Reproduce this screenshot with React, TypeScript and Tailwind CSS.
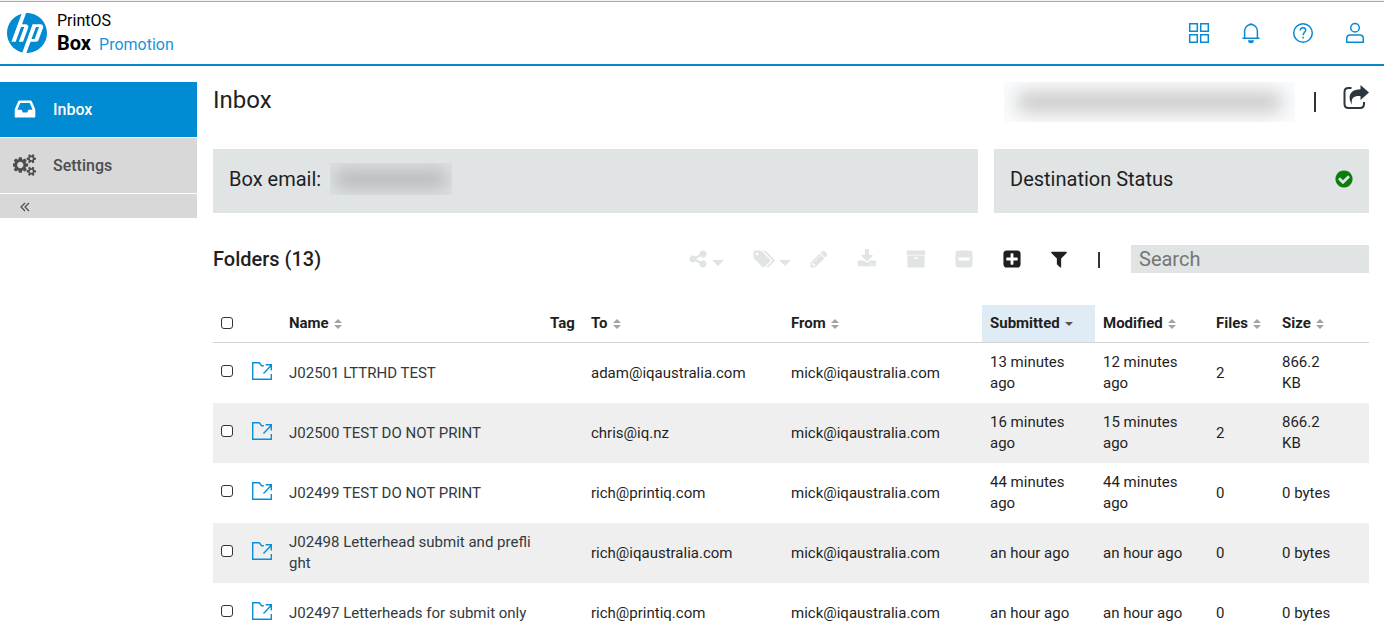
import type { ReactNode } from "react";
import { SiHp } from "react-icons/si";

const squarePath =
  "M1664 416v960q0 119-84.5 203.5t-203.5 84.5h-960q-119 0-203.5-84.5t-84.5-203.5v-960q0-119 84.5-203.5t203.5-84.5h960q119 0 203.5 84.5t84.5 203.5z";

const glyphs = {
  inbox:
    "M1151 960h316q-1-3-2.5-8t-2.5-8l-212-496h-708l-212 496q-1 2-2.5 8t-2.5 8h316l95 192h320zm513 30v482q0 26-19 45t-45 19h-1408q-26 0-45-19t-19-45v-482q0-62 25-123l238-552q10-25 36.5-42t52.5-17h832q26 0 52.5 17t36.5 42l238 552q25 61 25 123z",
  cogs: "M832 896q0-106-75-181t-181-75-181 75-75 181 75 181 181 75 181-75 75-181zm768 512q0-52-38-90t-90-38-90 38-38 90q0 53 37.5 90.5t90.5 37.5 90.5-37.5 37.5-90.5zm0-1024q0-52-38-90t-90-38-90 38-38 90q0 53 37.5 90.5t90.5 37.5 90.5-37.5 37.5-90.5zm-384 421v185q0 10-7 19.5t-16 10.5l-155 24q-11 35-32 76 34 48 90 115 7 11 7 20 0 12-7 19-23 30-82.5 89.5t-78.5 59.5q-11 0-21-7l-115-90q-37 19-77 31-11 108-23 155-7 24-30 24h-186q-11 0-20-7.5t-10-17.5l-23-153q-34-10-75-31l-118 89q-7 7-20 7-11 0-21-8-144-133-144-160 0-9 7-19 10-14 41-53t47-61q-23-44-35-82l-152-24q-10-1-17-9.5t-7-19.5v-185q0-10 7-19.5t16-10.5l155-24q11-35 32-76-34-48-90-115-7-11-7-20 0-12 7-20 22-30 82-89t79-59q11 0 21 7l115 90q34-18 77-32 11-108 23-154 7-24 30-24h186q11 0 20 7.5t10 17.5l23 153q34 10 75 31l118-89q8-7 20-7 11 0 21 8 144 133 144 160 0 8-7 19-12 16-42 54t-45 60q23 48 34 82l152 23q10 2 17 10.5t7 19.5zm640 533v140q0 16-149 31-12 27-30 52 51 113 51 138 0 4-4 7-122 71-124 71-8 0-46-47t-52-68q-20 2-30 2t-30-2q-14 21-52 68t-46 47q-2 0-124-71-4-3-4-7 0-25 51-138-18-25-30-52-149-15-149-31v-140q0-16 149-31 13-29 30-52-51-113-51-138 0-4 4-7 4-2 35-20t59-34 30-16q8 0 46 46.5t52 67.5q20-2 30-2t30 2q51-71 92-112l6-2q4 0 124 70 4 3 4 7 0 25-51 138 17 23 30 52 149 15 149 31zm0-1024v140q0 16-149 31-12 27-30 52 51 113 51 138 0 4-4 7-122 71-124 71-8 0-46-47t-52-68q-20 2-30 2t-30-2q-14 21-52 68t-46 47q-2 0-124-71-4-3-4-7 0-25 51-138-18-25-30-52-149-15-149-31v-140q0-16 149-31 13-29 30-52-51-113-51-138 0-4 4-7 4-2 35-20t59-34 30-16q8 0 46 46.5t52 67.5q20-2 30-2t30 2q51-71 92-112l6-2q4 0 124 70 4 3 4 7 0 25-51 138 17 23 30 52 149 15 149 31z",
  share:
    "M1344 1024q133 0 226.5 93.5t93.5 226.5-93.5 226.5-226.5 93.5-226.5-93.5-93.5-226.5q0-12 2-34l-360-180q-92 86-218 86-133 0-226.5-93.5t-93.5-226.5 93.5-226.5 226.5-93.5q126 0 218 86l360-180q-2-22-2-34 0-133 93.5-226.5t226.5-93.5 226.5 93.5 93.5 226.5-93.5 226.5-226.5 93.5q-126 0-218-86l-360 180q2 22 2 34t-2 34l360 180q92-86 218-86z",
  tags: "M576 448q0-53-37.5-90.5t-90.5-37.5-90.5 37.5-37.5 90.5 37.5 90.5 90.5 37.5 90.5-37.5 37.5-90.5zm1067 576q0 53-37 90l-491 492q-39 37-91 37-53 0-90-37l-715-716q-38-37-64.5-101t-26.5-117v-416q0-52 38-90t90-38h416q53 0 117 26.5t102 64.5l715 714q37 39 37 91zm384 0q0 53-37 90l-491 492q-39 37-91 37-36 0-59-14t-53-45l470-470q37-37 37-90 0-52-37-91l-715-714q-38-38-102-64.5t-117-26.5h224q53 0 117 26.5t102 64.5l715 714q37 39 37 91z",
  pencil:
    "M491 1536l91-91-235-235-91 91v107h128v128h107zm523-928q0-22-22-22-10 0-17 7l-542 542q-7 7-7 17 0 22 22 22 10 0 17-7l542-542q7-7 7-17zm-54-192l416 416-832 832h-416v-416zm683 96q0 53-37 90l-166 166-416-416 166-165q36-38 90-38 53 0 91 38l235 234q37 39 37 91z",
  download:
    "M1344 1344q0-26-19-45t-45-19-45 19-19 45 19 45 45 19 45-19 19-45zm256 0q0-26-19-45t-45-19-45 19-19 45 19 45 45 19 45-19 19-45zm128-224v320q0 40-28 68t-68 28h-1472q-40 0-68-28t-28-68v-320q0-40 28-68t68-28h465l135 136q58 56 136 56t136-56l136-136h464q40 0 68 28t28 68zm-325-569q17 41-14 70l-448 448q-18 19-45 19t-45-19l-448-448q-31-29-14-70 17-39 59-39h256v-448q0-26 19-45t45-19h256q26 0 45 19t19 45v448h256q42 0 59 39z",
  archive:
    "M1088 832q0-26-19-45t-45-19h-256q-26 0-45 19t-19 45 19 45 45 19h256q26 0 45-19t19-45zm576-192v960q0 26-19 45t-45 19h-1408q-26 0-45-19t-19-45v-960q0-26 19-45t45-19h1408q26 0 45 19t19 45zm64-448v256q0 26-19 45t-45 19h-1536q-26 0-45-19t-19-45v-256q0-26 19-45t45-19h1536q26 0 45 19t19 45z",
  minus:
    "M1408 960v-128q0-26-19-45t-45-19h-896q-26 0-45 19t-19 45v128q0 26 19 45t45 19h896q26 0 45-19t19-45z" +
    squarePath,
  plus:
    "M1408 960v-128q0-26-19-45t-45-19h-320v-320q0-26-19-45t-45-19h-128q-26 0-45 19t-19 45v320h-320q-26 0-45 19t-19 45v128q0 26 19 45t45 19h320v320q0 26 19 45t45 19h128q26 0 45-19t19-45v-320h320q26 0 45-19t19-45z" +
    squarePath,
  filter:
    "M1595 295q17 41-14 70l-493 493v742q0 42-39 59-13 5-25 5-27 0-45-19l-256-256q-19-19-19-45v-486l-493-493q-31-29-14-70 17-39 59-39h1280q42 0 59 39z",
  check:
    "M1412 734q0-28-18-46l-91-90q-19-19-45-19t-45 19l-408 407-226-226q-19-19-45-19t-45 19l-91 90q-18 18-18 46 0 27 18 45l362 362q19 19 45 19 27 0 46-19l543-543q18-18 18-45zm252 162q0 209-103 385.5t-279.5 279.5-385.5 103-385.5-103-279.5-279.5-103-385.5 103-385.5 279.5-279.5 385.5-103 385.5 103 279.5 279.5 103 385.5z",
};

function Glyph({ name, box = "0 0 1792 1792", className }: { name: keyof typeof glyphs; box?: string; className: string }) {
  return (
    <svg viewBox={box} className={className} fill="currentColor" fillRule="evenodd" aria-hidden="true">
      <path d={glyphs[name]} />
    </svg>
  );
}

function Line({ children, className = "size-6" }: { children: ReactNode; className?: string }) {
  return (
    <svg viewBox="0 0 24 24" className={className} fill="none" stroke="currentColor" strokeWidth="1.5" aria-hidden="true">
      {children}
    </svg>
  );
}

function Caret() {
  return (
    <svg viewBox="0 0 12 6" className="mt-2 h-[6px] w-3" fill="currentColor" aria-hidden="true">
      <path d="M0 0h12L6 6z" />
    </svg>
  );
}

function Sorter() {
  return (
    <svg viewBox="0 0 8 10" className="mt-px h-[10px] w-2" fill="#a3a3a3" aria-hidden="true">
      <path d="M4 0l4 4H0zM4 10L0 6h8z" />
    </svg>
  );
}

function FolderIcon() {
  return (
    <svg viewBox="0 0 22 20" className="h-5 w-[22px]" fill="none" stroke="#0a8fd6" strokeWidth="1.4" aria-hidden="true">
      <path d="M20.3 13v5.3H1.7V1.7h6.6L10.6 4.7h2.2" />
      <path d="M12.5 12.5l7.6-8M14.6 3.8h5.7v5.8" />
    </svg>
  );
}

function Header() {
  return (
    <header className="flex h-[66px] shrink-0 items-center justify-between border-t border-b-2 border-t-[#f1f1f1] border-b-[#0a86cb] pr-[17px] pl-[7px] shadow-[inset_0_1px_0_#a9a9a9]">
      <div className="flex items-center gap-[10px]">
        <SiHp className="size-10 text-[#008bd2]" aria-label="HP" />
        <div className="flex flex-col pt-px text-base leading-[22px] text-black">
          <span>PrintOS</span>
          <span className="flex items-baseline gap-2">
            <b className="text-xl leading-[22px]">Box</b>
            <a href="#promotion" className="text-[#1a94d6]">Promotion</a>
          </span>
        </div>
      </div>
      <nav className="flex gap-7 text-[#0a8ad0]">
        <button aria-label="Applications">
          <Line>
            <path d="M2.700 2.700h7.600v7.600H2.700zM13.700 2.700h7.600v7.600h-7.600zM2.700 13.700h7.600v7.600H2.700zM13.700 13.700h7.600v7.600h-7.600z" />
          </Line>
        </button>
        <button aria-label="Notifications">
          <Line>
            <path d="M3.5 17.3h17M5.6 17.3V10a6.4 6.4 0 0 1 12.8 0v7.3" />
            <path d="M10.2 4a1.8 1.8 0 0 1 3.6 0M9 19.200h6a3 3 0 0 1-6 0z" fill="currentColor" stroke="none" />
          </Line>
        </button>
        <button aria-label="Help">
          <Line>
            <circle cx="12" cy="12" r="9.3" />
            <path d="M9.300 9.500c0-1.800 1.100-2.800 2.700-2.800s2.700 1 2.700 2.500c0 2-2.600 2.400-2.600 5M12.100 15.800v1.700" />
          </Line>
        </button>
        <button aria-label="Account">
          <Line>
            <circle cx="12" cy="6.700" r="4.300" />
            <path d="M3.700 21.300v-3.600c0-2.300 1.400-3.700 3.700-3.700h9.200c2.300 0 3.700 1.400 3.700 3.700v3.600z" />
          </Line>
        </button>
      </nav>
    </header>
  );
}

function Sidebar() {
  return (
    <nav className="flex w-[197px] shrink-0 flex-col gap-px text-base font-medium text-[#4d4d4d]">
      <a href="#inbox" className="flex h-[55px] items-center gap-4 bg-[#008bd2] pl-[13px] text-white">
        <span className="flex w-6 pb-px">
          <Glyph name="inbox" className="size-6" box="0 0 1792 1792" />
        </span>
        Inbox
      </a>
      <a href="#settings" className="flex h-[55px] items-center gap-4 bg-[#d8d8d8] pl-[13px]">
        <span className="flex w-6 pb-[2px]">
          <Glyph name="cogs" box="0 0 1920 1792" className="h-[22px] w-6" />
        </span>
        Settings
      </a>
      <button aria-label="Collapse menu" className="flex h-6 items-center bg-[#d8d8d8] pt-px pl-5">
        <svg viewBox="0 0 10 10" className="size-[10px]" fill="none" stroke="currentColor" strokeWidth="1.2" aria-hidden="true">
          <path d="M5 1L1 5l4 4M9 1L5 5l4 4" />
        </svg>
      </button>
    </nav>
  );
}

function Toolbar() {
  return (
    <div className="flex items-center text-[#1f1f1f]">
      <div className="flex items-center text-[#e0e4e5]">
        <button aria-label="Share" className="mr-7 flex items-center gap-1">
          <Glyph name="share" className="size-5" />
          <Caret />
        </button>
        <button aria-label="Tags" className="mr-[18px] flex items-center gap-1">
          <Glyph name="tags" box="0 0 2048 1792" className="h-5 w-[23px]" />
          <Caret />
        </button>
        <button aria-label="Edit" className="mr-7">
          <Glyph name="pencil" className="size-5" />
        </button>
        <button aria-label="Download" className="mr-[29px]">
          <Glyph name="download" className="size-5" />
        </button>
        <button aria-label="Archive" className="mr-7">
          <Glyph name="archive" className="size-5" />
        </button>
        <button aria-label="Remove" className="mr-7">
          <Glyph name="minus" className="size-5" />
        </button>
      </div>
      <button aria-label="Add" className="mr-[27px]">
        <Glyph name="plus" className="size-5" />
      </button>
      <button aria-label="Filter" className="mr-[29px]">
        <Glyph name="filter" className="size-5" />
      </button>
      <span className="mt-px mr-[31px] h-4 w-[2px] bg-[#333]" />
      <input
        type="search"
        aria-label="Search"
        placeholder="Search"
        className="h-7 w-[238px] bg-[#e0e4e5] px-2 text-xl text-[#222] outline-none placeholder:text-[#757575]"
      />
    </div>
  );
}

const columns = [
  { label: "Name", sort: true },
  { label: "Tag", sort: false },
  { label: "To", sort: true },
  { label: "From", sort: true },
  { label: "Submitted", sort: true },
  { label: "Modified", sort: true },
  { label: "Files", sort: true },
  { label: "Size", sort: true },
];

const rows = [
  ["J02501 LTTRHD TEST", "", "adam@iqaustralia.com", "mick@iqaustralia.com", "13 minutes ago", "12 minutes ago", "2", "866.2 KB"],
  ["J02500 TEST DO NOT PRINT", "", "chris@iq.nz", "mick@iqaustralia.com", "16 minutes ago", "15 minutes ago", "2", "866.2 KB"],
  ["J02499 TEST DO NOT PRINT", "", "rich@printiq.com", "mick@iqaustralia.com", "44 minutes ago", "44 minutes ago", "0", "0 bytes"],
  ["J02498 Letterhead submit and preflight", "", "rich@iqaustralia.com", "mick@iqaustralia.com", "an hour ago", "an hour ago", "0", "0 bytes"],
  ["J02497 Letterheads for submit only", "", "rich@printiq.com", "mick@iqaustralia.com", "an hour ago", "an hour ago", "0", "0 bytes"],
];

function Check({ label }: { label: string }) {
  return (
    <input
      type="checkbox"
      aria-label={label}
      className="block size-3 appearance-none rounded-[3px] border border-[#333] bg-white checked:bg-[#008bd2]"
    />
  );
}

function FolderTable() {
  return (
    <table className="w-full table-fixed border-separate border-spacing-0 text-left text-[15px] leading-[21px] text-[#1f1f1f]">
      <colgroup>
        <col className="w-[30px]" />
        <col className="w-[38px]" />
        <col />
        <col className="w-[41px]" />
        <col className="w-[200px]" />
        <col className="w-[199px]" />
        <col className="w-[113px]" />
        <col className="w-[113px]" />
        <col className="w-[66px]" />
        <col className="w-[66px]" />
        <col className="w-[29px]" />
      </colgroup>
      <thead>
        <tr className="h-[38px] *:border-b *:border-[#d3d3d3]">
          <th className="pb-[2px] pl-2"><Check label="Select all folders" /></th>
          <th />
          {columns.map((c) => (
            <th key={c.label} className={c.label === "Submitted" ? "bg-[#dfecf5] px-2" : "px-2"}>
              <span className="flex items-center gap-[5px]">
                {c.label}
                {c.label === "Submitted" ? (
                  <svg viewBox="0 0 8 4" className="h-1 w-2" fill="#555" aria-hidden="true">
                    <path d="M0 0h8L4 4z" />
                  </svg>
                ) : (
                  c.sort && <Sorter />
                )}
              </span>
            </th>
          ))}
          <th />
        </tr>
      </thead>
      <tbody>
        {rows.map((r) => (
          <tr key={r[0]} className="h-[60px] even:bg-[#efefef]">
            <td className="pb-1 pl-2"><Check label={r[0]} /></td>
            <td className="pb-1 pl-2"><FolderIcon /></td>
            {r.map((v, i) => (
              <td key={i} className={i === 0 ? "px-2 break-all text-[#313a40]" : "px-2"}>{v}</td>
            ))}
            <td />
          </tr>
        ))}
      </tbody>
    </table>
  );
}

export default function App() {
  return (
    <div className="flex h-screen flex-col bg-white font-['Roboto',sans-serif] text-[#1f1f1f]">
      <Header />
      <div className="flex min-h-0 grow pt-4">
        <Sidebar />
        <main className="flex min-w-0 grow flex-col overflow-y-auto pr-[15px] pl-4 [scrollbar-width:none]">
          <div className="flex h-10 shrink-0 items-center justify-between">
            <h1 className="pb-1 text-2xl">Inbox</h1>
            <div className="flex items-center">
              <div className="flex h-10 w-[291px] items-center overflow-hidden bg-[#fafbfc] px-3">
                <div className="h-5 w-full rounded-full bg-[#c8c8c8] blur-[9px]" />
              </div>
              <span className="ml-[19px] h-5 w-[2px] bg-[#333]" />
              <button aria-label="Share box" className="ml-[26px] pb-[10px] text-[#2d363c]">
                <svg viewBox="0 0 27 25" className="h-[25px] w-[27px]" fill="none" aria-hidden="true">
                  <path d="M9.500 3H6.500C3.900 3 2.500 4.400 2.500 7v12c0 2.600 1.400 4 4 4h11.500c2.600 0 4-1.400 4-4v-2" stroke="currentColor" strokeWidth="2" />
                  <path d="M18.500 0l8.500 7.500L18.500 15V11c-6.500-.3-9.500 1.500-8.700 8.500C6 12.500 6.500 4.800 18.500 4.300z" fill="currentColor" />
                </svg>
              </button>
            </div>
          </div>
          <div className="mt-[27px] flex shrink-0 gap-4 text-xl">
            <section className="flex h-16 grow items-center bg-[#e0e4e5] px-4 pb-1">
              Box email:
              <div className="ml-[9px] flex h-8 w-[122px] items-center overflow-hidden bg-[#dce0e1] px-1">
                <div className="h-5 w-full rounded-full bg-[#babdbe] blur-[8px]" />
              </div>
            </section>
            <section className="flex h-16 w-[375px] items-center justify-between bg-[#e0e4e5] pr-[15px] pb-1 pl-4">
              Destination Status
              <Glyph name="check" className="size-5 text-[#0a7d0a]" />
            </section>
          </div>
          <div className="mt-8 mb-8 flex h-7 shrink-0 items-center justify-between">
            <h2 className="text-xl font-medium">Folders (13)</h2>
            <Toolbar />
          </div>
          <FolderTable />
        </main>
      </div>
    </div>
  );
}
